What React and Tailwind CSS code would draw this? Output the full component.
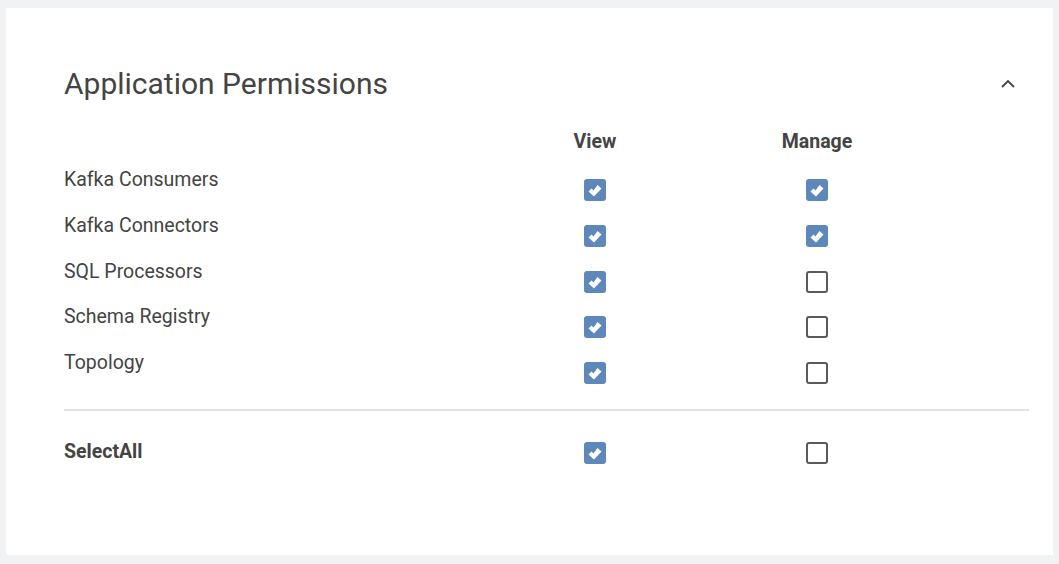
const rows = [
  { name: 'Kafka Consumers', view: true, manage: true },
  { name: 'Kafka Connectors', view: true, manage: true },
  { name: 'SQL Processors', view: true, manage: false },
  { name: 'Schema Registry', view: true, manage: false },
  { name: 'Topology', view: true, manage: false },
]

function Check({ checked }) {
  if (!checked) {
    return <div className="h-[22px] w-[22px] rounded-[3px] border-2 border-[#5a5a5a] bg-white" />
  }
  return (
    <svg width="22" height="22" viewBox="0 0 22 22">
      <rect x="0" y="0" width="22" height="22" rx="3" fill="#5e88b9" />
      <path d="M4.5 12.5 L7.5 9.5 L9.5 11.5 L13.5 6 L17.5 9.5 L10 17.5 Z" fill="#fff" />
    </svg>
  )
}

function Row({ name, view, manage, bold, pad = 'pt-[11px]' }) {
  return (
    <div className="flex h-[45.75px] items-start">
      <div className={`w-[486px] text-[19.5px] leading-6 ${bold ? 'font-bold' : ''}`}>{name}</div>
      <div className={`flex w-[90px] justify-center ${pad}`}>
        <Check checked={view} />
      </div>
      <div className={`ml-[132px] flex w-[90px] justify-center ${pad}`}>
        <Check checked={manage} />
      </div>
    </div>
  )
}

export default function App() {
  return (
    <div className="min-h-[564px] bg-[#f1f2f4] px-[6px] pt-[8px] pb-[9px] text-[#444]" style={{ fontFamily: 'Roboto, "Liberation Sans", sans-serif' }}>
      <div className="h-[547px] bg-white px-[58px] pt-[58px] pr-[24px]">
        <div className="flex items-center justify-between">
          <h2 className="text-[30px] leading-9">Application Permissions</h2>
          <svg width="16" height="16" viewBox="0 0 16 16" className="mr-[13px]">
            <path d="M2 11 L8 5 L14 11" stroke="#444" strokeWidth="1.8" fill="none" />
          </svg>
        </div>
        <div className="mt-[28px] flex h-[38px] items-start text-[19.5px] font-bold leading-6">
          <div className="w-[486px]" />
          <div className="w-[90px] text-center">View</div>
          <div className="ml-[132px] w-[90px] text-center">Manage</div>
        </div>
        {rows.map((r) => (
          <Row key={r.name} {...r} />
        ))}
        <div className="mt-[12px] border-t-2 border-[#e2e3e6]" />
        <div className="mt-[29px]">
          <Row name="SelectAll" view={true} manage={false} bold pad="pt-[2px]" />
        </div>
      </div>
    </div>
  )
}
